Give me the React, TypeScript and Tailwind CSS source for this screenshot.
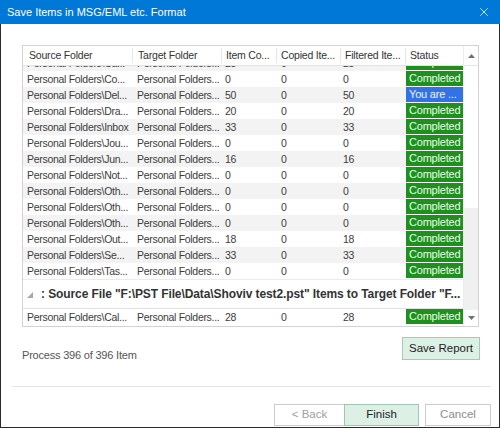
import { X } from 'lucide-react'

type Row = {
  source: string
  target: string
  items: string
  copied: string
  filtered: string
  status: 'done' | 'busy'
}

const rows: Row[] = [
  { source: 'Personal Folders\\Ca...', target: 'Personal Folders...', items: '28', copied: '0', filtered: '28', status: 'done' },
  { source: 'Personal Folders\\Co...', target: 'Personal Folders...', items: '0', copied: '0', filtered: '0', status: 'done' },
  { source: 'Personal Folders\\Del...', target: 'Personal Folders...', items: '50', copied: '0', filtered: '50', status: 'busy' },
  { source: 'Personal Folders\\Dra...', target: 'Personal Folders...', items: '20', copied: '0', filtered: '20', status: 'done' },
  { source: 'Personal Folders\\Inbox', target: 'Personal Folders...', items: '33', copied: '0', filtered: '33', status: 'done' },
  { source: 'Personal Folders\\Jou...', target: 'Personal Folders...', items: '0', copied: '0', filtered: '0', status: 'done' },
  { source: 'Personal Folders\\Jun...', target: 'Personal Folders...', items: '16', copied: '0', filtered: '16', status: 'done' },
  { source: 'Personal Folders\\Not...', target: 'Personal Folders...', items: '0', copied: '0', filtered: '0', status: 'done' },
  { source: 'Personal Folders\\Oth...', target: 'Personal Folders...', items: '0', copied: '0', filtered: '0', status: 'done' },
  { source: 'Personal Folders\\Oth...', target: 'Personal Folders...', items: '0', copied: '0', filtered: '0', status: 'done' },
  { source: 'Personal Folders\\Oth...', target: 'Personal Folders...', items: '0', copied: '0', filtered: '0', status: 'done' },
  { source: 'Personal Folders\\Out...', target: 'Personal Folders...', items: '18', copied: '0', filtered: '18', status: 'done' },
  { source: 'Personal Folders\\Se...', target: 'Personal Folders...', items: '33', copied: '0', filtered: '33', status: 'done' },
  { source: 'Personal Folders\\Tas...', target: 'Personal Folders...', items: '0', copied: '0', filtered: '0', status: 'done' },
]

const lastRow: Row = {
  source: 'Personal Folders\\Cal...',
  target: 'Personal Folders...',
  items: '28',
  copied: '0',
  filtered: '28',
  status: 'done',
}

function GridRow({ row, shaded }: { row: Row; shaded: boolean }) {
  return (
    <div
      className={`flex h-[16px] items-center whitespace-nowrap text-[10.5px] leading-[16px] tracking-[-0.3px] text-[#3c3c3c] ${
        shaded ? 'bg-[#f3f3f3]' : 'bg-white'
      }`}
    >
      <div className="w-[110px] pl-[4px]">{row.source}</div>
      <div className="w-[89px] pl-[4px]">{row.target}</div>
      <div className="w-[55px] pl-[3px]">{row.items}</div>
      <div className="w-[64px] pl-[4px]">{row.copied}</div>
      <div className="w-[65px] pl-[2px]">{row.filtered}</div>
      <div className="flex h-[16px] w-[57px] items-stretch pb-px">
        <div
          className={`w-full pl-[3px] text-[11px] leading-[15px] tracking-[-0.2px] ${
            row.status === 'busy' ? 'bg-[#3272e6] text-[#eef4ff]' : 'bg-[#1e901e] text-[#e6ffe6]'
          }`}
        >
          {row.status === 'busy' ? 'You are ...' : 'Completed'}
        </div>
      </div>
    </div>
  )
}

export default function App() {
  return (
    <div className="flex h-[428px] w-[500px] flex-col border-x border-b border-[#2b2b2b] bg-white font-['Liberation_Sans',Arial,sans-serif]">
      {/* title bar */}
      <div className="-mx-px flex h-[24px] items-center justify-between bg-[#0078d7] pl-[7px] pr-[9px] text-white">
        <span className="text-[11px]">Save Items in MSG/EML etc. Format</span>
        <X className="h-[14px] w-[14px]" strokeWidth={1.3} />
      </div>

      {/* grid */}
      <div className="ml-[21px] mt-[21px] flex h-[282px] w-[457px] border border-[#d2d2d2]">
        <div className="flex w-[440px] flex-col">
          <div className="flex h-[20px] items-center whitespace-nowrap border-b border-[#e2e2e2] text-[10.5px] tracking-[-0.2px] text-[#333]">
            <div className="w-[110px] border-r border-[#e5e5e5] pl-[6px]">Source Folder</div>
            <div className="w-[89px] border-r border-[#e5e5e5] pl-[5px]">Target Folder</div>
            <div className="w-[55px] border-r border-[#e5e5e5] pl-[4px]">Item Co...</div>
            <div className="w-[64px] border-r border-[#e5e5e5] pl-[4px]">Copied Ite...</div>
            <div className="w-[65px] border-r border-[#e5e5e5] pl-[4px]">Filtered Ite...</div>
            <div className="w-[57px] pl-[4px]">Status</div>
          </div>
          <div className="h-[213px] overflow-hidden">
            <div className="-mt-[11px]">
              {rows.map((r, i) => (
                <GridRow key={i} row={r} shaded={i % 2 === 0} />
              ))}
            </div>
          </div>
          <div className="h-px bg-[#ebebeb]" />
          <div className="flex h-[28px] items-center bg-white pl-[4px] text-[#333]">
            <svg width="6" height="6" viewBox="0 0 6 6" className="mr-[8px] mt-[1px]">
              <path d="M6 0 L6 6 L0 6 Z" fill="#a8a8a8" />
            </svg>
            <span className="whitespace-nowrap text-[12px] font-bold tracking-[-0.1px]">
              : Source File "F:\PST File\Data\Shoviv test2.pst" Items to Target Folder "F...
            </span>
          </div>
          <div className="h-px bg-[#e2e2e2]" />
          <GridRow row={lastRow} shaded={false} />
        </div>

        {/* scrollbar */}
        <div className="flex w-[15px] flex-col border-l border-[#ededed]">
          <div className="flex h-[20px] items-center justify-center border-b border-[#e5e5e5]">
            <svg width="7" height="4" viewBox="0 0 7 4">
              <path d="M0 4 L3.5 0 L7 4 Z" fill="#707070" />
            </svg>
          </div>
          <div className="h-[142px] bg-white" />
          <div className="flex-1 bg-[#f0f0f0]" />
          <div className="flex h-[16px] items-center justify-center bg-white">
            <svg width="7" height="4" viewBox="0 0 7 4">
              <path d="M0 0 L7 0 L3.5 4 Z" fill="#707070" />
            </svg>
          </div>
        </div>
      </div>

      {/* status line */}
      <div className="mt-[10px] flex items-start justify-between pl-[21px] pr-[19px]">
        <span className="pt-[10px] text-[11px] tracking-[-0.2px] text-[#555]">Process 396 of 396 Item</span>
        <button className="h-[23px] w-[78px] border border-[#a9c9b8] bg-[#dcf0e6] text-[11.5px] text-[#222]">
          Save Report
        </button>
      </div>

      <div className="ml-[11px] mt-[22px] h-px w-[479px] bg-[#e6e6e6]" />

      {/* wizard buttons */}
      <div className="mt-[17px] flex justify-end pr-[8px]">
        <button className="h-[22px] w-[71px] border border-[#cccccc] bg-white text-[11.5px] text-[#a0a0a0]">
          &lt; Back
        </button>
        <button className="-ml-px h-[22px] w-[75px] border border-[#a3c6b4] bg-[#dcf0e6] text-[11.5px] text-[#222]">
          Finish
        </button>
        <button className="ml-[6px] h-[22px] w-[66px] border border-[#cccccc] bg-white text-[11.5px] text-[#8c8c8c]">
          Cancel
        </button>
      </div>
    </div>
  )
}
